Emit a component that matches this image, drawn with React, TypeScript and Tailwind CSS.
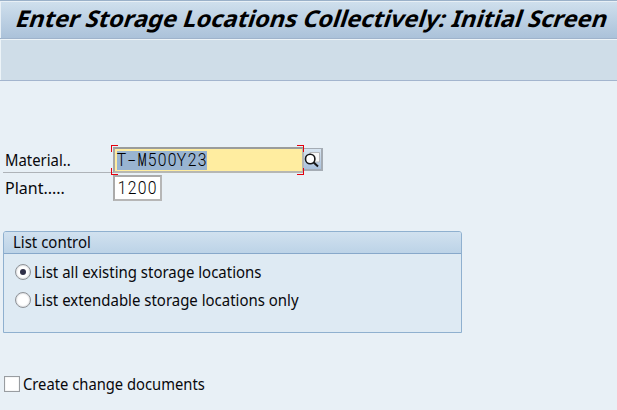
import React from "react";

const label = "whitespace-pre text-[16px] leading-[20px] text-[#08080c]";

function MonoText({ text }: { text: string }) {
  return (
    <span className="flex h-[19px] font-['Roboto','Noto_Sans',sans-serif] text-[18.5px] font-light leading-[19px] text-black">
      {text.split("").map((char, i) => (
        <span key={i} className="flex w-[10px] justify-center">
          <span className={char === "M" ? "-mx-2 scale-x-[0.55] font-normal" : char === "-" ? "scale-x-[1.5]" : "-mx-1 scale-x-[0.85]"}>{char}</span>
        </span>
      ))}
    </span>
  );
}

function Radio({ checked, text }: { checked?: boolean; text: string }) {
  return (
    <div className="flex h-7 items-center">
      <span className="flex size-4 shrink-0 items-center justify-center rounded-full border border-[#8d9196] bg-white shadow-[inset_0_0_2px_#aeb2b6]">
        {checked && <span className="size-[6px] rounded-full bg-[#303048]" />}
      </span>
      <span className={`${label} ml-[3px] origin-left scale-x-[0.935]`}>{text}</span>
    </div>
  );
}

export default function App() {
  return (
    <main className="h-[410px] w-[617px] overflow-hidden bg-[#e8f0f6] font-['Noto_Sans',sans-serif]">
      <header className="h-[39px] border-y border-t-[#9bb1c9] border-b-[#9fb3cb] bg-linear-to-b from-[#d0e0ed] to-[#abc2da] shadow-[inset_1px_1px_0_#e8f0f6]">
        <h1 className="ml-[14px] w-max origin-[0_27px] [transform:skewX(-18deg)_scaleX(1.028)] whitespace-pre text-[23px] font-bold leading-[34px] text-black">
          Enter Storage Locations Collectively: Initial Screen
        </h1>
      </header>
      <div className="h-[42px] border-b border-[#a3b5ce] bg-[#cfdde8] shadow-[inset_1px_1px_0_#edf4f8]" />

      <section className="mt-[66px] ml-[3px]">
        <div className="flex h-[26px]">
          <div className={`${label} w-[110px] border-b border-[#aeb3b8] pt-[3px] pl-[2px]`}>
            <span className="inline-block origin-left scale-x-[0.93]">Material..</span>
          </div>
          <div className="relative flex h-[26px] w-[191px] border-2 border-t-[#9a9c9b] border-r-[#b6b7b3] border-b-[#b6b7b3] border-l-[#a6a8a7] bg-[#ffeda0] pt-[2px] pl-[2px]">
            <span className="h-[19px] bg-[#99b4d1]"><MonoText text="T-M500Y23" /></span>
            <i className="absolute -top-[4px] -left-[4px] size-[7px] border-t border-l border-[#e5000c]" />
            <i className="absolute -top-[4px] -right-[2px] size-[7px] border-t border-r border-[#e5000c]" />
            <i className="absolute -bottom-[4px] -left-[4px] size-[7px] border-b border-l border-[#e5000c]" />
            <i className="absolute -right-[2px] -bottom-[4px] size-[7px] border-r border-b border-[#e5000c]" />
          </div>
          <button className="mt-[1px] flex h-[23px] w-[19px] items-center justify-center border-r-2 border-b-2 border-t border-[#a5acb4] bg-linear-to-b from-[#d8e5f1] to-[#aac1dc]">
            <svg width="17" height="19" viewBox="0 0 17 19" fill="none">
              <path d="M6 2.5h9.5v9.5H6z" fill="#f7f8f8" stroke="#b5b7b9" />
              <circle cx="6.2" cy="9" r="4.7" fill="#fff" stroke="#171717" strokeWidth="1.6" />
              <path d="m9.7 12.5 4.3 4" stroke="#171717" strokeWidth="2" />
            </svg>
          </button>
        </div>
        <div className="mt-[2px] flex h-[26px]">
          <div className={`${label} w-[110px] pt-[3px] pl-[2px]`}>
            <span className="inline-block">Plant.....</span>
          </div>
          <div className="h-[26px] w-[49px] border-2 border-t-[#aaa] border-r-[#b6b6b6] border-b-[#b6b6b6] border-l-[#aaa] bg-white pt-[2px] pl-[2px]"><MonoText text="1200" /></div>
        </div>
      </section>

      <section className="mt-[30px] ml-[3px] h-[102px] w-[459px] rounded-t-[3px] border border-[#8fb0cf] bg-[#deeaf3]">
        <h2 className={`${label} h-[22px] rounded-t-[2px] border-b border-[#87a8ca] bg-linear-to-b from-[#d1e1ef] to-[#bcd3e7] pl-[9px]`}>
          <span className="inline-block origin-left scale-x-[0.935]">List control</span>
        </h2>
        <div className="mt-[4px] ml-[11px]">
          <Radio checked text="List all existing storage locations" />
          <Radio text="List extendable storage locations only" />
        </div>
      </section>

      <div className="mt-[41px] ml-[4px] flex h-5 items-center">
        <span className="size-4 border border-[#999da1] bg-white shadow-[inset_0_0_1px_#a5a9ad]" />
        <span className={`${label} ml-[3px] origin-left scale-x-[0.922]`}>Create change documents</span>
      </div>
    </main>
  );
}
